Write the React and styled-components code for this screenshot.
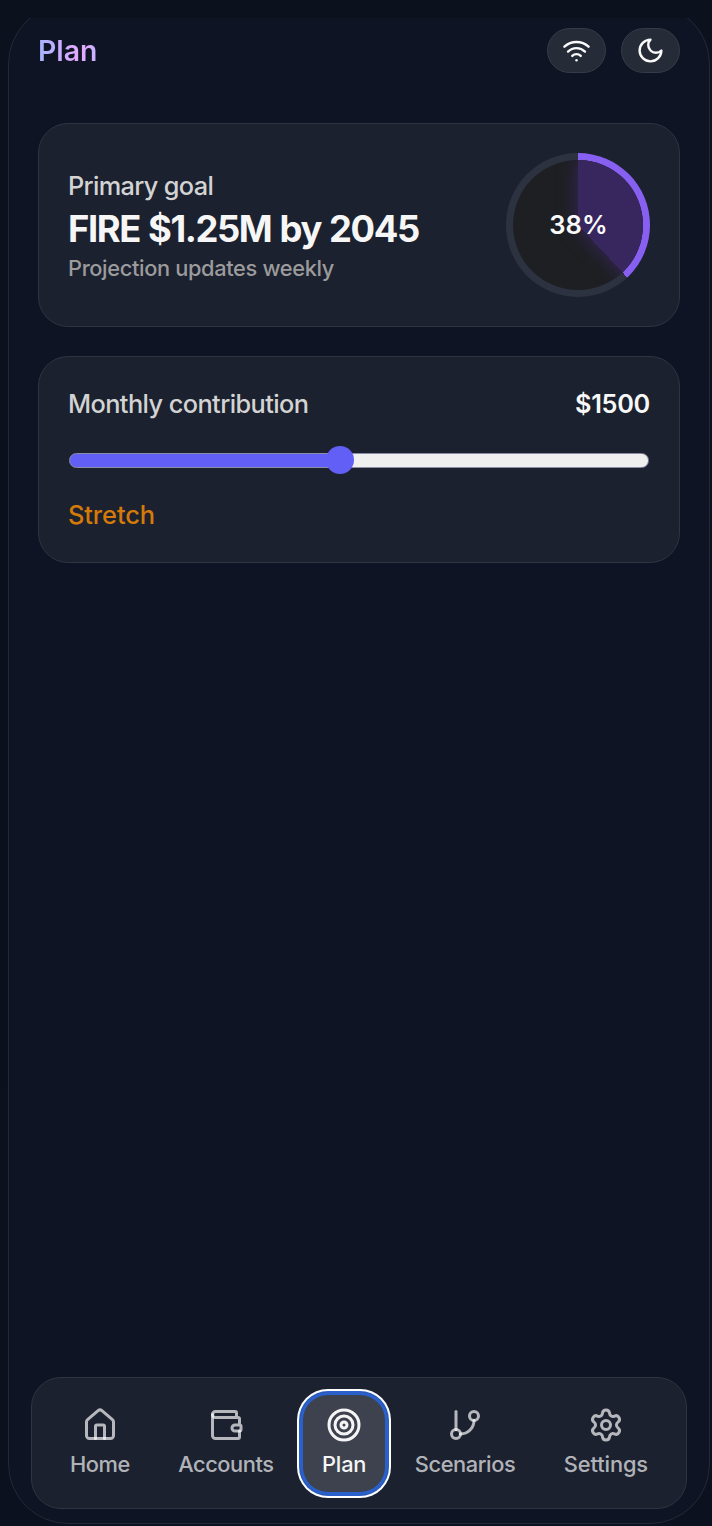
import React, { useState } from "react";
import styled, { createGlobalStyle } from "styled-components";
import { Wifi, House, Wallet, Target, GitBranch, Settings } from "lucide-react";

const GlobalStyle = createGlobalStyle`
  * { box-sizing: border-box; }
  html, body { margin: 0; background: #0b111e; }
  body { font-family: Inter, "Liberation Sans", sans-serif; color: #f7f7f7; }
  button, input { font: inherit; margin: 0; }
`;

const Screen = styled.div`
  height: 1526px;
  padding: 18px 2px 2px 8px;
  background: linear-gradient(180deg, #0b121e 0%, #0a101d 50%, #0b111e 100%);
  overflow: hidden;
`;

const Clip = styled.div`
  height: 1506px;
  overflow: hidden;
`;

const Frame = styled.main`
  height: 1520px;
  margin-top: -14px;
  padding: 23px 22px 14px;
  display: flex;
  flex-direction: column;
  border: 1px solid #232938;
  border-radius: 60px;
  background: #0e1423;
`;

const Header = styled.header`
  height: 45px;
  margin: 0 7px 50px;
  display: flex;
  align-items: center;
  justify-content: space-between;
`;

const Title = styled.h1`
  margin: 0;
  font-size: 28.4px;
  line-height: 40px;
  font-weight: 600;
  background: linear-gradient(90deg, #a3b3ff 0%, #e9a8ff 72%, #c4b4ff 100%);
  background-clip: text;
  -webkit-background-clip: text;
  color: transparent;
`;

const Actions = styled.div`
  display: flex;
  gap: 15px;
`;

const Pill = styled.button`
  width: 59px;
  height: 45px;
  padding: 0;
  display: flex;
  align-items: center;
  justify-content: center;
  color: #fafafa;
  background: #262b38;
  border: 1px solid #363b48;
  border-radius: 23px;
`;

const Card = styled.section`
  height: ${(p) => p.$height}px;
  margin: 0 7px ${(p) => p.$gap || 0}px;
  padding: 0 29px;
  display: flex;
  flex-direction: ${(p) => (p.$column ? "column" : "row")};
  align-items: ${(p) => (p.$column ? "stretch" : "center")};
  justify-content: ${(p) => (p.$column ? "flex-start" : "space-between")};
  border: 1px solid #2e3442;
  border-radius: 30px;
  background: #1b212f;
`;

const GoalText = styled.div`
  display: flex;
  flex-direction: column;
  padding-bottom: 2px;
`;

const Label = styled.span`
  font-size: 25.3px;
  line-height: 37px;
  font-weight: 450;
  letter-spacing: ${(p) => p.$track || 0}px;
  color: #d3d3d3;
`;

const GoalName = styled.strong`
  font-size: 36.4px;
  line-height: 50px;
  font-weight: 700;
  letter-spacing: -1.42px;
  word-spacing: 1px;
  color: #f6f6f6;
`;

const Hint = styled.span`
  font-size: 21.8px;
  line-height: 28px;
  font-weight: 450;
  letter-spacing: -0.35px;
  color: #9b9b9c;
`;

const Ring = styled.div`
  width: 144px;
  height: 144px;
  display: grid;
  place-items: center;
  border-radius: 50%;
  background: conic-gradient(#8760f2 0 38%, #2c3240 38% 100%);
`;

const RingCore = styled.div`
  position: relative;
  width: 130px;
  height: 130px;
  display: grid;
  place-items: center;
  overflow: hidden;
  border-radius: 50%;
  background: #1d1f22;
  &::before, &::after {
    content: "";
    position: absolute;
    inset: 0;
    background: conic-gradient(#38265f 0 38%, transparent 38% 100%);
  }
  &::before { filter: blur(10px); }
`;

const Percent = styled.span`
  position: relative;
  z-index: 1;
  padding: 0 0 1px 1px;
  font-size: 25.6px;
  font-weight: 600;
  color: #fafafa;
`;

const Row = styled.div`
  display: flex;
  justify-content: space-between;
  margin-top: 28px;
`;

const Amount = styled.span`
  font-size: 25.3px;
  line-height: 37px;
  font-weight: 600;
  letter-spacing: -0.3px;
  color: #f7f7f7;
`;

const Range = styled.input`
  appearance: none;
  width: 580px;
  height: 28px;
  margin: 24px 0 22px 1px;
  background: transparent;
  &::-webkit-slider-runnable-track {
    height: 15px;
    border: 1px solid #8b8ca6;
    border-radius: 8px;
    background: linear-gradient(90deg, #625ff6 0 46.7%, #efefef 46.7%);
  }
  &::-webkit-slider-thumb {
    appearance: none;
    width: 28px;
    height: 28px;
    margin-top: -7.5px;
    border-radius: 50%;
    background: #625ff6;
  }
`;

const Status = styled.span`
  font-size: 25.4px;
  line-height: 37px;
  font-weight: 500;
  letter-spacing: -0.1px;
  color: #d47a08;
`;

const Nav = styled.nav`
  height: 132px;
  margin-top: auto;
  padding: 0 16px;
  display: flex;
  align-items: center;
  justify-content: space-between;
  border: 1px solid #2e3442;
  border-radius: 30px;
  background: #1b212f;
`;

const NavItem = styled.button`
  height: 103px;
  padding: 15px 22px;
  display: flex;
  flex-direction: column;
  align-items: center;
  gap: 6px;
  border: 0;
  border-radius: 28px;
  outline: none;
  color: ${(p) => (p.$active ? "#f5f5f5" : "rgba(255, 255, 255, 0.68)")};
  background: ${(p) => (p.$active ? "#3d424e" : "transparent")};
  box-shadow: ${(p) =>
    p.$active ? "inset 0 0 0 3px #2a60cb, 0 0 0 1px #2a60cb, 0 0 0 3px #ffffff" : "none"};
`;

const NavLabel = styled.span`
  font-size: 21.8px;
  line-height: 30px;
  font-weight: 500;
  letter-spacing: ${(p) => p.$track}px;
`;

const MoonIcon = () => (
  <svg width="29" height="29" viewBox="0 0 24 24" fill="none" stroke="currentColor"
    strokeWidth="2" strokeLinecap="round" strokeLinejoin="round">
    <path d="M12 3a6 6 0 0 0 9 9 9 9 0 1 1-9-9Z" />
  </svg>
);

const tabs = [
  { name: "Home", Icon: House, track: -0.45 },
  { name: "Accounts", Icon: Wallet, track: -0.45 },
  { name: "Plan", Icon: Target, track: -0.15 },
  { name: "Scenarios", Icon: GitBranch, track: -0.4 },
  { name: "Settings", Icon: Settings, track: -0.1 },
];

export default function App() {
  const [active, setActive] = useState("Plan");
  const [amount, setAmount] = useState(1500);
  return (
    <>
      <GlobalStyle />
      <Screen>
        <Clip>
          <Frame>
            <Header>
              <Title>Plan</Title>
              <Actions>
                <Pill aria-label="Connection"><Wifi size={29} /></Pill>
                <Pill aria-label="Theme"><MoonIcon /></Pill>
              </Actions>
            </Header>
            <Card $height={204} $gap={29}>
              <GoalText>
                <Label $track={-0.65}>Primary goal</Label>
                <GoalName>FIRE $1.25M by 2045</GoalName>
                <Hint>Projection updates weekly</Hint>
              </GoalText>
              <Ring>
                <RingCore><Percent>38%</Percent></RingCore>
              </Ring>
            </Card>
            <Card $height={207} $column>
              <Row>
                <Label $track={-0.57}>Monthly contribution</Label>
                <Amount>${amount}</Amount>
              </Row>
              <Range type="range" min="100" max="3110" step="10" value={amount}
                aria-label="Monthly contribution"
                onChange={(e) => setAmount(Number(e.target.value))} />
              <Status>Stretch</Status>
            </Card>
            <Nav>
              {tabs.map(({ name, Icon, track }) => (
                <NavItem key={name} $active={name === active} onClick={() => setActive(name)}>
                  <Icon size={36} strokeWidth={2} />
                  <NavLabel $track={track}>{name}</NavLabel>
                </NavItem>
              ))}
            </Nav>
          </Frame>
        </Clip>
      </Screen>
    </>
  );
}
